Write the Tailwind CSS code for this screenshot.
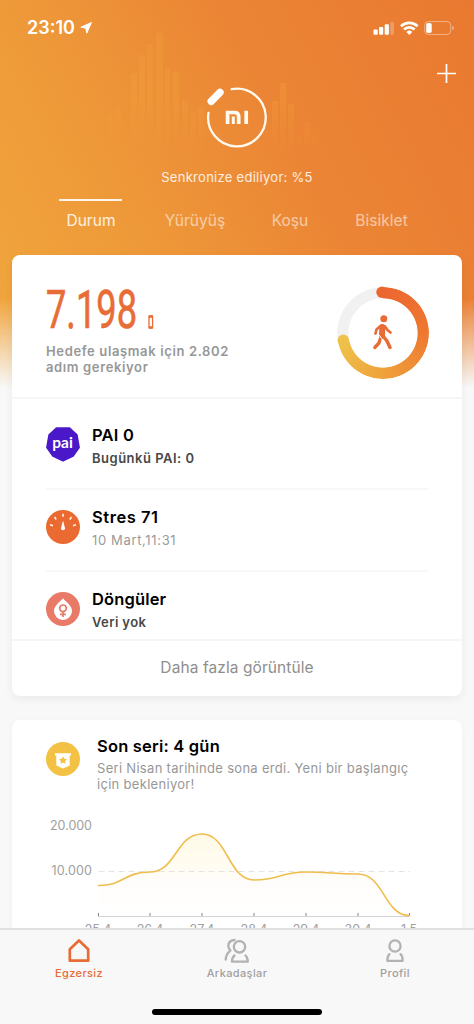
<!DOCTYPE html>
<html lang="tr">
<head>
  <meta charset="UTF-8" />
  <meta name="viewport" content="width=device-width, initial-scale=1.0" />
  <title>Mi Fit - Durum</title>
  <script src="https://cdn.jsdelivr.net/npm/@tailwindcss/browser@4"></script>
</head>
<body class="bg-[#f8f8f8] font-['Inter',sans-serif]">

  <div class="relative w-[474px] h-[1024px] overflow-hidden flex flex-col">

    <!-- Turuncu arka plan -->
    <div class="absolute inset-x-0 top-0 h-[388px] bg-[linear-gradient(62deg,#f1a73d_0%,#ee9939_32%,#eb8535_62%,#e97930_100%)] mask-[linear-gradient(to_bottom,black_77%,transparent_100%)]">
      <svg class="block" width="474" height="160" viewBox="0 0 474 160">
        <defs>
          <linearGradient id="bar" gradientUnits="userSpaceOnUse" x1="0" y1="30" x2="0" y2="152">
            <stop offset="0" stop-color="#f2a03a" stop-opacity=".32" />
            <stop offset=".55" stop-color="#f2a03a" stop-opacity=".36" />
            <stop offset="1" stop-color="#f2a03a" stop-opacity="0" />
          </linearGradient>
        </defs>
        <path fill="url(#bar)" d="M107 115h6v40h-6zM115 107h6v48h-6zM131 73h6v82h-6zM139 55h6v100h-6zM147 44h6v111h-6zM156 33h7v122h-7zM165 68h5v87h-5zM173 72h6v83h-6zM182 101h6v54h-6zM190 113h6v42h-6zM198 107h6v48h-6zM272 101h6v54h-6zM280 83h6v72h-6zM288 104h6v51h-6zM296 136h6v19h-6zM304 123h6v32h-6zM312 135h6v20h-6z" />
      </svg>
    </div>

    <main class="relative h-[929px] shrink-0 overflow-hidden">

      <!-- Durum çubuğu -->
      <div class="h-14 pl-[27px] pr-[19px] flex items-center justify-between text-white">
        <div class="flex items-center gap-[5px]">
          <span class="text-[18px] font-semibold leading-none">23:10</span>
          <svg width="12" height="12" viewBox="0 0 12 12" fill="white"><path d="M11.400.6 .8 5.200 5.800 6.200 6.800 11.200Z" stroke="white" stroke-width="1" stroke-linejoin="round" /></svg>
        </div>
        <svg width="82" height="16" viewBox="0 0 82 16" fill="white">
          <rect x="0.500" y="9.500" width="4.200" height="5.200" rx="1" />
          <rect x="6" y="7" width="4.200" height="7.700" rx="1" />
          <rect x="11.700" y="4.300" width="4.200" height="10.400" rx="1" />
          <rect x="17.300" y="2" width="3.600" height="12.700" rx="1" opacity=".25" />
          <g fill="none" stroke="white" stroke-width="2.700">
            <path d="M28 6.200a12 12 0 0 1 16.600 0" />
            <path d="M31 9.500a7.600 7.600 0 0 1 10.600 0" />
          </g>
          <path d="M33.400 11.900a4.300 4.300 0 0 1 5.800 0l-2.900 3Z" />
          <rect x="51.700" y="1.500" width="26" height="13" rx="3.800" fill="none" stroke="white" stroke-opacity=".4" />
          <path d="M79.300 5.700v4.600q1.500-.6 1.500-2.300t-1.500-2.300Z" opacity=".5" />
          <rect x="53.200" y="3" width="5.500" height="10" rx="1.800" />
        </svg>
      </div>

      <!-- Senkronizasyon -->
      <div class="relative h-[135px] flex flex-col items-center">
        <svg class="absolute right-[18px] top-2" width="19" height="19" viewBox="0 0 19 19" stroke="white" stroke-width="1.700"><path d="M9.500 0v19M0 9.500h19" /></svg>
        <svg class="mt-[30px]" width="62" height="62" viewBox="0 0 62 62" fill="none" stroke="#fffaf0">
          <path d="M25.700 3.200A28.800 28.800 0 1 1 2.500 27" stroke-width="2.300" stroke-linecap="round" />
          <path d="M5.200 15.300 14 6.300" stroke="white" stroke-width="7.400" stroke-linecap="round" />
          <path d="M21.600 38V26.500H28.600Q32.700 26.500 32.700 30.500V38M40.200 24.800V38" stroke-width="3.700" />
          <path d="M27.300 30.500V38" stroke-width="3" />
        </svg>
        <p class="mt-[21px] text-[13px] leading-4 tracking-[.28px] text-white/85">Senkronize ediliyor: %5</p>
      </div>

      <!-- Sekmeler -->
      <nav class="h-16 pl-[41px] pr-[42px] grid grid-cols-[100px_108px_82px_101px] text-[15.500px] tracking-[.05px] text-white/55 text-center">
        <a class="relative pt-[18px] leading-[24px] text-white/85"><span class="absolute top-[8px] left-[18px] w-[63px] h-[2px] bg-white/90"></span>Durum</a>
        <a class="pt-[18px] leading-[24px]">Yürüyüş</a>
        <a class="pt-[18px] leading-[24px]">Koşu</a>
        <a class="pt-[18px] leading-[24px]">Bisiklet</a>
      </nav>

      <!-- Günlük özet -->
      <section class="mx-3 h-[441px] bg-white rounded-lg shadow-[0_3px_10px_rgba(0,0,0,0.06)]">
        <div class="h-[144px] pl-[34px] pr-[33px] flex justify-between border-b-2 border-[#f6f6f6]">
          <div class="pt-[27px]">
            <svg class="block overflow-visible" width="110" height="48" viewBox="0 0 110 48">
              <text x="0" y="45.800" font-family="Roboto, sans-serif" font-size="53" fill="#e86c36" stroke="#e86c36" stroke-width=".7" textLength="91" lengthAdjust="spacingAndGlyphs">7.198</text>
              <rect x="103" y="34.200" width="3.600" height="11.600" rx=".8" fill="none" stroke="#e86c36" stroke-width="1.300" />
              <path d="M102.600 34.500h4.400M102.600 45.500h4.400" stroke="#e86c36" stroke-width="2.400" />
            </svg>
            <p class="mt-[13px] text-[13px] leading-4 font-semibold tracking-[.63px] text-[#979797]">Hedefe ulaşmak için 2.802<br />adım gerekiyor</p>
          </div>
          <div class="relative mt-[31px] size-[93px]">
            <div class="absolute inset-[.5px] rounded-full bg-[conic-gradient(#ec6630_0deg,#ee7830_90deg,#efa13b_180deg,#eec44b_259deg,#f1f1f1_259deg)] mask-[radial-gradient(circle,transparent_34.2px,black_35px)]"></div>
            <svg class="absolute inset-0" width="93" height="93" viewBox="0 0 93 93" fill="none">
              <circle cx="46" cy="6.300" r="5.700" fill="#ec6730" />
              <circle cx="7.300" cy="54.200" r="5.700" fill="#eec24a" />
              <circle cx="47.800" cy="32.700" r="3.500" fill="#e86c36" />
              <g stroke="#e86c36" stroke-linecap="round" stroke-linejoin="round">
                <path d="M46.300 41 46 50" stroke-width="6" />
                <path d="M44.500 40 40.500 43.500 39.500 47.500M49 40.500 51.500 44 54.500 46.500" stroke-width="2.700" />
                <path d="M47 50 51 55 54 61.500" stroke-width="3.500" />
                <path d="M44 53.500 43 57 38.800 61.500" stroke-width="3.300" />
              </g>
              <path d="M43 49 48.500 56" stroke="white" stroke-width="1" />
            </svg>
          </div>
        </div>

        <div class="h-[240px] pl-[34px] pr-[34px] overflow-hidden">
          <div class="h-[91px] flex pt-[24px] gap-3 border-b-2 border-[#f7f7f7]">
            <svg class="mt-[4px]" width="34" height="35" viewBox="0 0 34 35">
              <path d="M10.500 1.200H23.500L30.800 8 33 20.500 27 29 17 33.800 7 29 1 20.500 3.200 8Z" fill="#4a18c8" stroke="#4a18c8" stroke-width="1.800" stroke-linejoin="round" />
              <text x="6.300" y="21.300" font-family="Lato, sans-serif" font-weight="700" font-size="15.500" fill="white" textLength="20.500" lengthAdjust="spacingAndGlyphs">pai</text>
            </svg>
            <div>
              <h3 class="text-[16.500px] leading-6 font-semibold tracking-[.25px] text-black">PAI 0</h3>
              <p class="text-[13px] leading-[22px] font-semibold tracking-[.5px] text-[#484848]">Bugünkü PAI: 0</p>
            </div>
          </div>
          <div class="h-[82px] flex pt-[15px] gap-3 border-b-2 border-[#f7f7f7]">
            <svg class="mt-[5px]" width="34" height="34" viewBox="0 0 34 34">
              <circle cx="17" cy="17" r="17" fill="#eb6a31" />
              <path d="M17 3.800V6.800M8.500 7 10.200 9.500M25.500 7 23.800 9.500M4 14.700 7 15.700M30 14.700 27 15.700" stroke="#fff6ed" stroke-width="1.500" />
              <path d="M16.700 11.500h.6L19 18.300a2 2 0 1 1-4 0Z" fill="white" />
            </svg>
            <div>
              <h3 class="text-[16.500px] leading-6 font-semibold tracking-[.55px] text-black">Stres 71</h3>
              <p class="text-[13px] leading-[22px] tracking-[.65px] text-[#9a9a9a]">10 Mart,11:31</p>
            </div>
          </div>
          <div class="flex pt-[15px] gap-3">
            <svg class="mt-[5px]" width="34" height="34" viewBox="0 0 34 34">
              <circle cx="17" cy="17" r="17" fill="#e97a68" />
              <path d="M17 6.300C19 9.500 26 13 26 19a9 9 0 0 1-18 0C8 13 15 9.500 17 6.300Z" fill="white" />
              <g fill="none" stroke="#e97a68" stroke-width="1.700"><circle cx="17" cy="16.300" r="3.300" /><path d="M17 19.700V25M14 22.300h6" /></g>
            </svg>
            <div>
              <h3 class="text-[16.500px] leading-6 font-semibold tracking-[.15px] text-black">Döngüler</h3>
              <p class="text-[13px] leading-[22px] font-semibold tracking-[.4px] text-[#484848]">Veri yok</p>
            </div>
          </div>
        </div>

        <a class="h-[57px] pb-px flex items-center justify-center border-t-2 border-[#f5f5f5] text-[15.500px] tracking-[.08px] text-[#8e8e8e]">Daha fazla görüntüle</a>
      </section>

      <!-- Seri kartı -->
      <section class="mx-3 mt-6 h-[300px] bg-white rounded-lg shadow-[0_2px_10px_rgba(0,0,0,0.03)]">
        <div class="flex pl-[34px] pt-[14px] gap-[17px]">
          <svg class="mt-[8px]" width="34" height="34" viewBox="0 0 34 34">
            <circle cx="17" cy="17" r="17" fill="#f3c244" />
            <path d="M9 11.300H25V13.500H23.700V23.500L17 26.500 10.300 23.500V13.500H9Z" fill="white" />
            <path d="m17 14.500 1.300 2.300 2.700.5-1.900 1.900.4 2.600-2.500-1.200-2.500 1.200.4-2.600-1.900-1.900 2.700-.5Z" fill="#f3c244" />
          </svg>
          <div>
            <h3 class="text-[16.500px] leading-6 font-semibold tracking-[.2px] text-black">Son seri: 4 gün</h3>
            <p class="mt-[2px] text-[13px] leading-4 tracking-[.3px] text-[#979797]">Seri Nisan tarihinde sona erdi. Yeni bir başlangıç<br />için bekleniyor!</p>
          </div>
        </div>

        <!-- Adım grafiği -->
        <svg class="mt-[23px]" width="450" height="140" viewBox="12 815 450 140" font-family="Inter, sans-serif" fill="#a0a0a0" font-size="12.500">
          <defs>
            <linearGradient id="area" x1="0" y1="0" x2="0" y2="1">
              <stop offset="0" stop-color="#fff9df" stop-opacity=".75" />
              <stop offset=".6" stop-color="#fffdfb" />
              <stop offset="1" stop-color="#ffffff" />
            </linearGradient>
          </defs>
          <text x="50" y="830" textLength="42">20.000</text>
          <text x="51.500" y="875" textLength="40.500">10.000</text>
          <path d="M98.500 885.500C124 885.500 124 872 150 872C176 872 176 834 202 834C228 834 228 880 254 880C280 880 280 872 306 872C332 872 332 874 358 874C384 874 384 915.500 409.500 915.500V916H98.500Z" fill="url(#area)" />
          <path d="M98.500 871.500H410" stroke="#e8e2e2" stroke-dasharray="6 4" />
          <path d="M98 916.500H410" stroke="#c8c8c8" stroke-width=".8" />
          <path d="M98.500 913v3M150 913v3M202 913v3M254 913v3M306 913v3M358 913v3M409.500 913v3" stroke="#858585" />
          <path d="M98.500 885.500C124 885.500 124 872 150 872C176 872 176 834 202 834C228 834 228 880 254 880C280 880 280 872 306 872C332 872 332 874 358 874C384 874 384 915.500 409.500 915.500" fill="none" stroke="#efbd4d" stroke-width="1.600" stroke-linecap="round" />
          <g text-anchor="middle">
            <text x="98" y="933.500">25.4</text>
            <text x="150" y="933.500">26.4</text>
            <text x="202" y="933.500">27.4</text>
            <text x="254" y="933.500">28.4</text>
            <text x="306" y="933.500">29.4</text>
            <text x="358" y="933.500">30.4</text>
            <text x="409" y="933.500">1.5</text>
          </g>
        </svg>
      </section>
    </main>

    <!-- Alt menü -->
    <footer class="relative h-[96px] -mt-px shrink-0 bg-[#f8f8f8] border-t-2 border-[#e0e0e0] text-[11px] leading-[14px] tracking-[.38px] font-medium text-[#a0a0a0]">
      <div class="grid grid-cols-3">
        <a class="flex flex-col items-center pt-[8px] text-[#e86c36]">
          <svg width="24" height="26" viewBox="0 0 24 26" fill="none" stroke="#e86c36" stroke-width="2.700" stroke-linejoin="round"><path d="M2.800 11.300 12 2.500 21.200 11.300V22.700H2.800Z" /></svg>
          <span class="mt-[2px]">Egzersiz</span>
        </a>
        <a class="flex flex-col items-center pt-[8px]">
          <svg width="26" height="26" viewBox="0 0 26 26" fill="none" stroke="#b2b2b2" stroke-width="2.300" stroke-linecap="round" stroke-linejoin="round">
            <circle cx="15.500" cy="8.800" r="5.700" />
            <path d="M10.500 17.500Q8 19.500 8 23.700H23.800Q23.800 19.500 21.500 17.500" />
            <path d="M10.500 2Q4.300 2.500 4.300 8Q4.500 10.500 6.500 12.300Q2 16 1.700 21.500" />
          </svg>
          <span class="mt-[2px]">Arkadaşlar</span>
        </a>
        <a class="flex flex-col items-center pt-[8px]">
          <svg width="24" height="26" viewBox="0 0 24 26" fill="none" stroke="#b2b2b2" stroke-width="2.300" stroke-linecap="round" stroke-linejoin="round">
            <circle cx="12" cy="8" r="5.600" />
            <path d="M6.500 16.200Q4.300 18 4.300 22.800H19.700Q19.700 18 17.500 16.200" />
          </svg>
          <span class="mt-[2px]">Profil</span>
        </a>
      </div>
      <div class="absolute left-[152px] bottom-[9px] w-[170px] h-[6px] rounded-full bg-black"></div>
    </footer>
  </div>

</body>
</html>
